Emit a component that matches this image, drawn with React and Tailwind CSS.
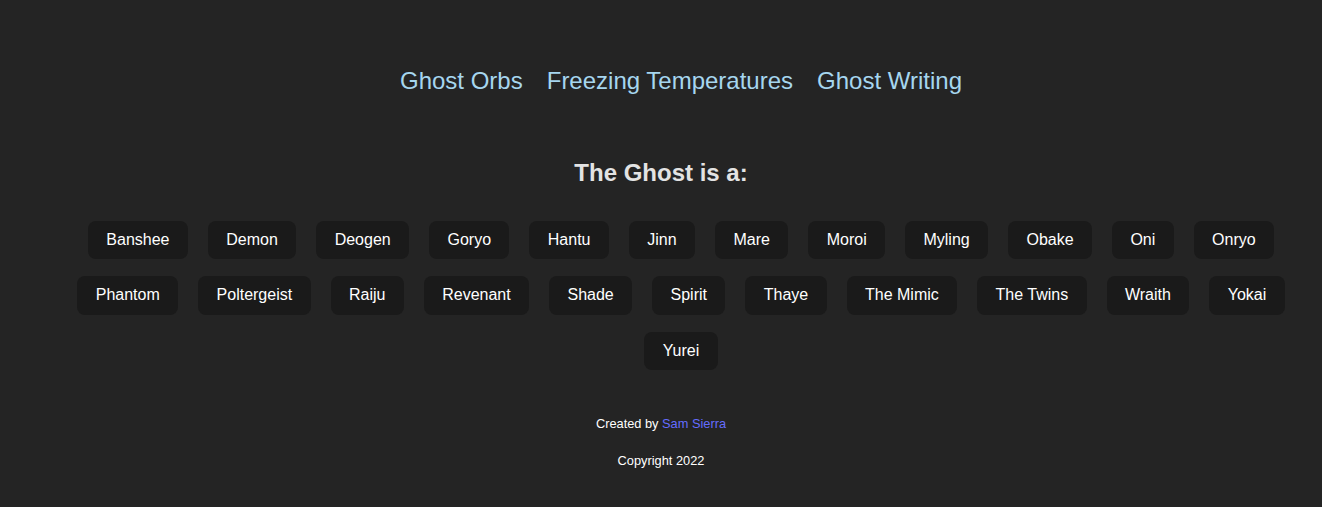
export default function App() {
  const ghosts = [
    "Banshee","Demon","Deogen","Goryo","Hantu","Jinn","Mare","Moroi","Myling","Obake","Oni","Onryo",
    "Phantom","Poltergeist","Raiju","Revenant","Shade","Spirit","Thaye","The Mimic","The Twins","Wraith","Yokai","Yurei",
  ];
  return (
    <div className="min-h-screen w-full bg-[#242424] text-[rgba(255,255,255,0.87)] font-['Liberation_Sans',Arial,sans-serif]">
      <ul className="flex justify-center gap-6 pl-10 pt-[67px] text-[24px] leading-[28px] text-[#a6d6ef]">
        <li>Ghost Orbs</li>
        <li>Freezing Temperatures</li>
        <li>Ghost Writing</li>
      </ul>
      <h2 className="mt-[64px] text-center text-[24px] leading-[28px] font-bold text-[#e3e3e3]">The Ghost is a:</h2>
      <div className="mt-[34px] pl-10 flex flex-wrap justify-center gap-x-5 gap-y-[17px]">
        {ghosts.map((g) => (
          <button key={g} className="rounded-lg bg-[#1a1a1a] px-[18.4px] py-[10px] text-[16px] leading-[18.4px] text-white">
            {g}
          </button>
        ))}
      </div>
      <p className="mt-[45px] text-center text-[12.8px] leading-[17px] text-white">
        Created by <span className="text-[#646cff]">Sam Sierra</span>
      </p>
      <p className="mt-[20px] text-center text-[12.8px] leading-[17px] text-white">Copyright 2022</p>
    </div>
  );
}
